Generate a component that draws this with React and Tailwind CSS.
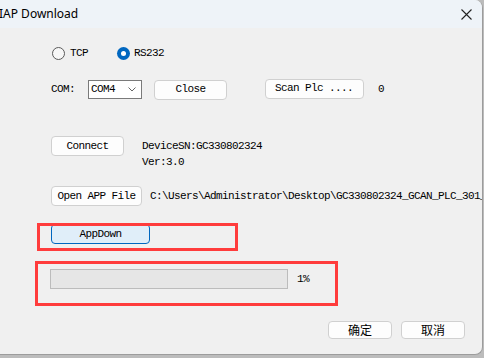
import React from "react";

const mono = { fontFamily: '"Liberation Mono", "DejaVu Sans Mono", monospace' };

function Btn({ children, className = "" }) {
  return (
    <div
      className={`flex items-center justify-center bg-[#fdfdfd] border border-[#d0d0d0] rounded-[4px] text-[11px] tracking-[-0.6px] text-black ${className}`}
    >
      {children}
    </div>
  );
}

export default function App() {
  return (
    <div className="w-[484px] h-[358px] bg-[#bcbcbc] overflow-hidden" style={mono}>
      <div className="relative w-[483px] h-[355px] bg-[#f0f0f0] border-r border-b border-[#9c9c9c] rounded-r-[8px] overflow-hidden">
        {/* title bar */}
        <div className="h-[28px] bg-[#eef3f8] flex items-center justify-between">
          <span
            className="text-[12px] text-black -ml-[1px]"
            style={{ fontFamily: '"Noto Sans", "Open Sans", sans-serif' }}
          >
            IAP Download
          </span>
          <svg width="11" height="11" viewBox="0 0 11 11" className="mr-[10px]">
            <path d="M0.5 0.5 L10.5 10.5 M10.5 0.5 L0.5 10.5" stroke="#222" strokeWidth="1.1" />
          </svg>
        </div>

        {/* radio row */}
        <div className="mt-[18px] h-[14px] flex items-center pl-[52px] text-[11px] tracking-[-0.6px] text-black">
          <div className="w-[13px] h-[13px] rounded-full border border-[#5a5a5a] bg-[#f7f7f7]" />
          <span className="ml-[5px]">TCP</span>
          <div className="ml-[29px] w-[13px] h-[13px] rounded-full bg-[#0067c0] flex items-center justify-center">
            <div className="w-[5px] h-[5px] rounded-full bg-white" />
          </div>
          <span className="ml-[4px]">RS232</span>
        </div>

        {/* COM row */}
        <div className="mt-[19px] h-[21px] flex items-center pl-[51px] text-[11px] tracking-[-0.6px] text-black">
          <span>COM:</span>
          <div className="ml-[13px] w-[54px] h-[19px] bg-white border border-[#7a7a7a] flex items-center justify-between pl-[2px] pr-[5px]">
            <span>COM4</span>
            <svg width="8" height="5" viewBox="0 0 8 5">
              <path d="M0.5 0.5 L4 4 L7.5 0.5" stroke="#666" strokeWidth="1" fill="none" />
            </svg>
          </div>
          <Btn className="ml-[12px] w-[73px] h-[20px]">Close</Btn>
          <Btn className="ml-[38px] w-[99px] h-[20px] -mt-[2px] justify-start pl-[9px]">Scan Plc ....</Btn>
          <span className="ml-[14px]">0</span>
        </div>

        {/* Connect row */}
        <div className="mt-[36px] h-[36px] flex items-start pl-[51px] text-[11px] tracking-[-0.6px] text-black">
          <Btn className="w-[73px] h-[20px]">Connect</Btn>
          <div className="ml-[18px] mt-[2px] flex flex-col">
            <span className="leading-[16px]">DeviceSN:GC330802324</span>
            <span className="leading-[16px]">Ver:3.0</span>
          </div>
        </div>

        {/* Open APP row */}
        <div className="mt-[14px] h-[20px] flex items-center pl-[51px] text-[11px] tracking-[-0.6px] text-black whitespace-nowrap">
          <Btn className="w-[91px] h-[20px] shrink-0">Open APP File</Btn>
          <span className="ml-[8px]">C:\Users\Administrator\Desktop\GC330802324_GCAN_PLC_301_</span>
        </div>

        {/* AppDown row */}
        <div className="mt-[18px] h-[20px] flex items-center pl-[51px]">
          <div className="w-[99px] h-[20px] flex items-center justify-center bg-[#e0eef9] border border-[#0067c0] rounded-[4px] text-[11px] tracking-[-0.6px] text-black">
            AppDown
          </div>
        </div>

        {/* Progress row */}
        <div className="mt-[25px] h-[20px] flex items-center pl-[50px] text-[11px] tracking-[-0.6px] text-black">
          <div className="w-[238px] h-[20px] bg-[#e6e6e6] border border-[#bcbcbc]" />
          <span className="ml-[9px]">1%</span>
        </div>

        {/* Bottom buttons */}
        <div
          className="mt-[32px] h-[18px] flex justify-end gap-[9px] pr-[17px]"
          style={{ fontFamily: '"Noto Sans CJK SC", "Noto Sans", sans-serif' }}
        >
          <div className="w-[64px] h-[18px] flex items-center justify-center bg-[#fdfdfd] border border-[#d0d0d0] rounded-[4px] text-[12px] text-black">
            确定
          </div>
          <div className="w-[64px] h-[18px] flex items-center justify-center bg-[#fdfdfd] border border-[#d0d0d0] rounded-[4px] text-[12px] text-black">
            取消
          </div>
        </div>

        {/* red annotation boxes */}
        <div className="absolute left-[37px] top-[223px] w-[201px] h-[28px] border-[3px] border-[#ff3c3c]" />
        <div className="absolute left-[35px] top-[261px] w-[303px] h-[45px] border-[3px] border-[#ff3c3c]" />
      </div>
    </div>
  );
}
